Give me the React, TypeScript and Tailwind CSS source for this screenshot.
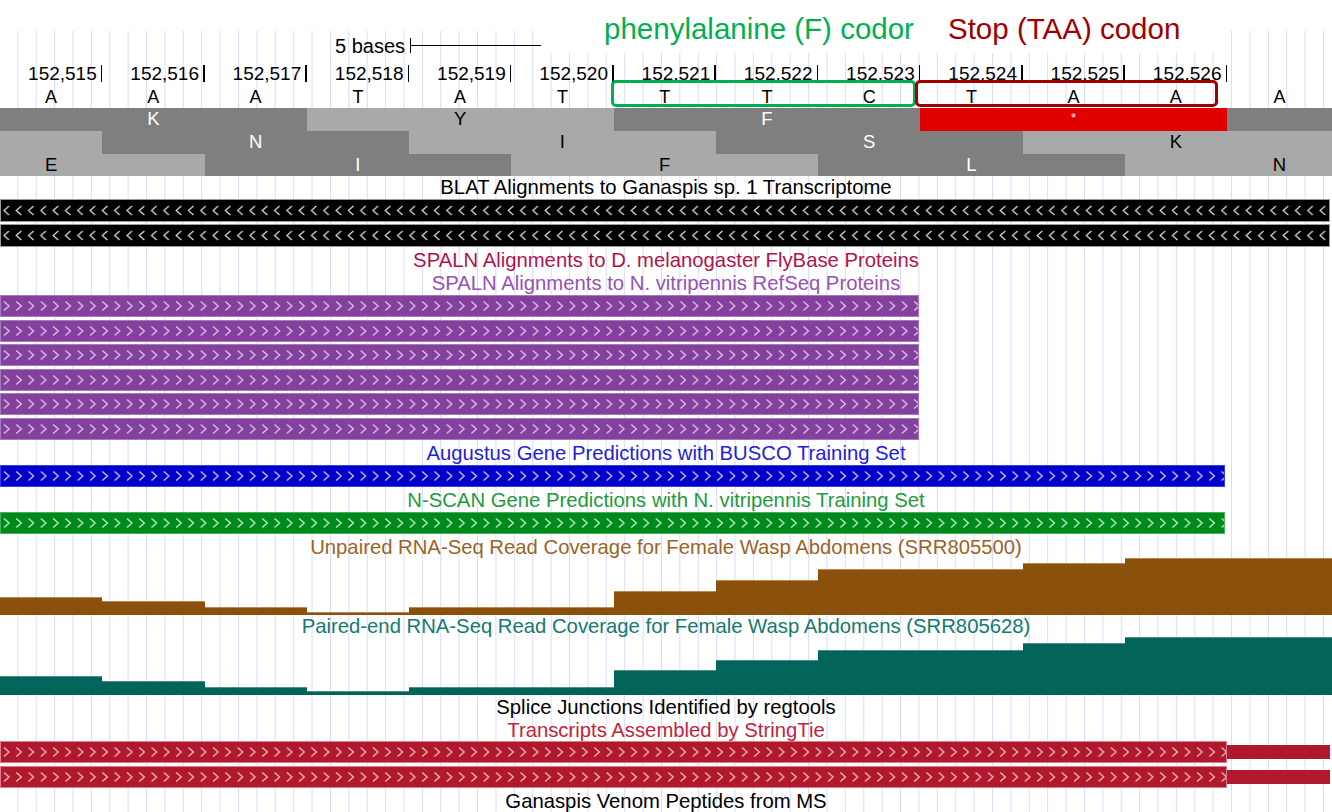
import type { ReactNode } from "react";

// 13 bases across the window, ~102.25px each; last column takes the leftover pixels
const COLS = "grid grid-cols-[repeat(12,102.25px)_1fr]";

const bases = ["A", "A", "A", "T", "A", "T", "T", "T", "C", "T", "A", "A", "A"];
const positions = [
    "152,515", "152,516", "152,517", "152,518", "152,519", "152,520",
    "152,521", "152,522", "152,523", "152,524", "152,525", "152,526",
];

type Shade = "dark" | "light" | "stop";

interface AminoSegment {
    span: 1 | 2 | 3;
    shade: Shade;
    letter?: string;
    at?: 1 | 2 | 3;
}

const shadeClass: Record<Shade, string> = {
    dark: "bg-[#7f7f7f] text-white",
    light: "bg-[#a9a9a9] text-black",
    stop: "bg-[#e00000] text-white",
};

const spanClass: Record<number, string> = {
    1: "col-span-1",
    2: "col-span-2",
    3: "col-span-3",
};

const startClass: Record<number, string> = {
    1: "col-start-1",
    2: "col-start-2",
    3: "col-start-3",
};

const frames: { height: string; segments: AminoSegment[] }[] = [
    {
        height: "h-[23px]",
        segments: [
            { span: 3, shade: "dark", letter: "K", at: 2 },
            { span: 3, shade: "light", letter: "Y", at: 2 },
            { span: 3, shade: "dark", letter: "F", at: 2 },
            { span: 3, shade: "stop", letter: "*", at: 2 },
            { span: 1, shade: "dark" },
        ],
    },
    {
        height: "h-[23px]",
        segments: [
            { span: 1, shade: "light" },
            { span: 3, shade: "dark", letter: "N", at: 2 },
            { span: 3, shade: "light", letter: "I", at: 2 },
            { span: 3, shade: "dark", letter: "S", at: 2 },
            { span: 3, shade: "light", letter: "K", at: 2 },
        ],
    },
    {
        height: "h-[22px]",
        segments: [
            { span: 2, shade: "light", letter: "E", at: 1 },
            { span: 3, shade: "dark", letter: "I", at: 2 },
            { span: 3, shade: "light", letter: "F", at: 2 },
            { span: 3, shade: "dark", letter: "L", at: 2 },
            { span: 2, shade: "light", letter: "N", at: 2 },
        ],
    },
];

// coverage steps: [bases spanned, height in px above the baseline]
const unpairedCoverage: [number, number][] = [
    [1, 18], [1, 14], [1, 8], [1, 3], [2, 8], [1, 24], [1, 35], [2, 46], [1, 52], [2, 57],
];
const pairedCoverage: [number, number][] = [
    [1, 19], [1, 14], [1, 8], [1, 4], [2, 8], [1, 25], [1, 35], [2, 45], [1, 52], [2, 58],
];

function TrackLabel({ children, className, tall = false }: { children: ReactNode; className: string; tall?: boolean }) {
    return (
        <div
            className={`text-center text-[20.3px] whitespace-nowrap ${tall ? "h-[23px] leading-[23px]" : "h-[21px] leading-[21px]"} ${className}`}
        >
            {children}
        </div>
    );
}

interface FeatureBarProps {
    id: string;
    className: string;
    chevron: string;
    inner: number;
    reverse?: boolean;
}

function FeatureBar({ id, className, chevron, inner, reverse = false }: FeatureBarProps) {
    const mid = inner / 2;
    const d = reverse
        ? `M8 ${mid - 4.5} L3 ${mid} L8 ${mid + 4.5}`
        : `M3 ${mid - 4.5} L8 ${mid} L3 ${mid + 4.5}`;
    return (
        <div className={`border ${className}`}>
            <svg className="block h-full w-full">
                <defs>
                    <pattern id={id} width="12.3" height={inner} patternUnits="userSpaceOnUse">
                        <path d={d} fill="none" stroke={chevron} strokeWidth="1.3" />
                    </pattern>
                </defs>
                <rect width="100%" height="100%" fill={`url(#${id})`} />
            </svg>
        </div>
    );
}

function CoverageChart({ steps, className, height }: { steps: [number, number][]; className: string; height: string }) {
    return (
        <div className={`${COLS} ${height} items-end`}>
            {steps.map(([span, h], i) => (
                <div key={i} className={`${spanClass[span]} ${className}`} style={{ height: h }} />
            ))}
        </div>
    );
}

export default function App() {
    return (
        <div className="relative h-[812px] w-[1332px] overflow-hidden bg-white font-['Liberation_Sans',Arial,sans-serif] text-black">
            <div className="h-[31px]" />

            {/* everything below the top margin sits on the light blue base grid */}
            <div className="[background-image:linear-gradient(to_right,#d9d9ff_1px,transparent_1px)] [background-size:18.4px_100%] [background-position:17.3px_0]">
                {/* scale bar */}
                <div className="flex h-[27px] items-center pt-[2px] pl-[335px]">
                    <span className="text-[20px] leading-none">5 bases</span>
                    <div className="ml-[5px] flex h-[15px] w-[131px] items-center border-l-[1.5px] border-black">
                        <div className="h-[1.5px] w-full bg-black" />
                    </div>
                </div>

                {/* base positions */}
                <div className={`${COLS} h-[27px]`}>
                    {positions.map((p) => (
                        <div key={p} className="flex items-center justify-end pt-[3px]">
                            <span className="mr-[4px] text-[19px] leading-none">{p}</span>
                            <span className="h-[17px] w-[1.5px] bg-black" />
                        </div>
                    ))}
                </div>

                {/* sequence */}
                <div className={`${COLS} h-[23px]`}>
                    {bases.map((b, i) => (
                        <div key={i} className="flex items-center justify-center text-[18px] leading-none">
                            {b}
                        </div>
                    ))}
                </div>

                {/* three-frame translation */}
                {frames.map((frame, fi) => (
                    <div key={fi} className={`${COLS} ${frame.height}`}>
                        {frame.segments.map((seg, si) => (
                            <div key={si} className={`${spanClass[seg.span]} grid grid-cols-subgrid ${shadeClass[seg.shade]}`}>
                                {seg.letter && seg.at && (
                                    <span
                                        className={`${startClass[seg.at]} flex justify-center leading-none ${
                                            seg.letter === "*" ? "items-start pt-[3px] text-[13px]" : "items-center text-[18.5px]"
                                        }`}
                                    >
                                        {seg.letter}
                                    </span>
                                )}
                            </div>
                        ))}
                    </div>
                ))}

                <TrackLabel tall className="text-black">BLAT Alignments to Ganaspis sp. 1 Transcriptome</TrackLabel>
                <div className="flex flex-col gap-[2px]">
                    <FeatureBar id="blat1" inner={21} reverse className="h-[23px] w-[1330px] border-[#9a9a9a] bg-black" chevron="#d4d4d4" />
                    <FeatureBar id="blat2" inner={21} reverse className="h-[23px] w-[1330px] border-[#9a9a9a] bg-black" chevron="#d4d4d4" />
                </div>

                <TrackLabel tall className="mt-[2px] text-[#b0134c]">SPALN Alignments to D. melanogaster FlyBase Proteins</TrackLabel>
                <TrackLabel tall className="text-[#9552b4]">SPALN Alignments to N. vitripennis RefSeq Proteins</TrackLabel>
                <div className="flex flex-col gap-[2.5px]">
                    {["sp1", "sp2", "sp3", "sp4", "sp5", "sp6"].map((id) => (
                        <FeatureBar key={id} id={id} inner={20} className="h-[22px] w-[919px] border-[#a678c0] bg-[#83409c]" chevron="#dcc6e8" />
                    ))}
                </div>

                <TrackLabel tall className="mt-[2px] text-[#2222d6]">Augustus Gene Predictions with BUSCO Training Set</TrackLabel>
                <FeatureBar id="aug" inner={20} className="h-[22px] w-[1225px] border-[#3a3af0] bg-[#0000c8]" chevron="#c8c8ff" />

                <TrackLabel tall className="mt-[2px] text-[#1f9a3c]">N-SCAN Gene Predictions with N. vitripennis Training Set</TrackLabel>
                <FeatureBar id="nscan" inner={20} className="h-[22px] w-[1225px] border-[#48b058] bg-[#008a1c]" chevron="#c4eec8" />

                <TrackLabel className="mt-[3px] text-[#9a6426]">Unpaired RNA-Seq Read Coverage for Female Wasp Abdomens (SRR805500)</TrackLabel>
                <CoverageChart steps={unpairedCoverage} height="h-[57px]" className="border-t border-[#b88a4c] bg-[#8b500b]" />

                <TrackLabel className="mt-[1px] text-[#137a72]">Paired-end RNA-Seq Read Coverage for Female Wasp Abdomens (SRR805628)</TrackLabel>
                <CoverageChart steps={pairedCoverage} height="h-[58px]" className="border-t border-[#4f8f88] bg-[#03645a]" />

                <TrackLabel tall className="mt-[1px] text-black">Splice Junctions Identified by regtools</TrackLabel>
                <TrackLabel className="h-[22px] leading-[22px] text-[#c2243c]">Transcripts Assembled by StringTie</TrackLabel>
                <div className="flex flex-col gap-[3px]">
                    {["st1", "st2"].map((id) => (
                        <div key={id} className="flex items-center">
                            <FeatureBar id={id} inner={20} className="h-[22px] w-[1227px] shrink-0 border-[#e07c8c] bg-[#b0182c]" chevron="#f3b8c0" />
                            <div className="h-[14px] w-[103px] bg-[#b0182c]" />
                        </div>
                    ))}
                </div>

                <TrackLabel tall className="mt-[2px] text-black">Ganaspis Venom Peptides from MS</TrackLabel>
            </div>

            {/* callout annotations pasted over the browser image */}
            <div className="absolute left-[541px] top-0 h-[53px] w-[686px] bg-white">
                <span className="absolute left-[63px] top-[14px] text-[29.5px] leading-none text-[#00b050]">
                    phenylalanine (F) codor
                </span>
                <span className="absolute left-[407px] top-[14px] text-[29.5px] leading-none text-[#a00000]">
                    Stop (TAA) codon
                </span>
            </div>
            <div className="absolute left-[611px] top-[80px] h-[27px] w-[305px] rounded-[5px] border-[3px] border-[#00b050]" />
            <div className="absolute left-[915px] top-[80px] h-[27px] w-[303px] rounded-[5px] border-[3px] border-[#a00000]" />
        </div>
    );
}
